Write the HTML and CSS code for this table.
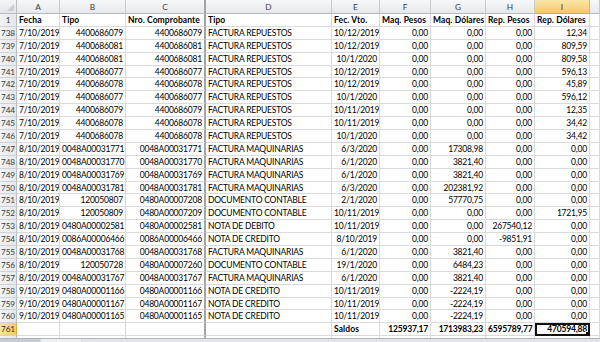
FILE: index.html
```html
<!DOCTYPE html>
<html>
<head>
<meta charset="utf-8">
<link rel="stylesheet" href="styles.css">
</head>
<body>
<div class="app">
<div class="sheet">
  <div class="corner"><span class="tri"></span></div>
  <div class="ch">A</div><div class="ch">B</div><div class="ch frz">C</div><div class="ch">D</div><div class="ch">E</div><div class="ch">F</div><div class="ch">G</div><div class="ch">H</div><div class="ch selh">I</div><div class="ch"></div>

  <div class="rh">1</div>
  <div class="c b">Fecha</div><div class="c b">Tipo</div><div class="c b frz">Nro. Comprobante</div><div class="c b">Tipo</div><div class="c b">Fec. Vto.</div><div class="c b">Maq. Pesos</div><div class="c b">Maq. Dólares</div><div class="c b">Rep. Pesos</div><div class="c b">Rep. Dólares</div><div class="c"></div>

  <div class="rh">738</div>
  <div class="c r">7/10/2019</div><div class="c r">4400686079</div><div class="c r frz">4400686079</div><div class="c">FACTURA REPUESTOS</div><div class="c r">10/12/2019</div><div class="c r">0,00</div><div class="c r">0,00</div><div class="c r">0,00</div><div class="c r">12,34</div><div class="c"></div>

  <div class="rh">739</div>
  <div class="c r">7/10/2019</div><div class="c r">4400686081</div><div class="c r frz">4400686081</div><div class="c">FACTURA REPUESTOS</div><div class="c r">10/12/2019</div><div class="c r">0,00</div><div class="c r">0,00</div><div class="c r">0,00</div><div class="c r">809,59</div><div class="c"></div>

  <div class="rh">740</div>
  <div class="c r">7/10/2019</div><div class="c r">4400686081</div><div class="c r frz">4400686081</div><div class="c">FACTURA REPUESTOS</div><div class="c r">10/1/2020</div><div class="c r">0,00</div><div class="c r">0,00</div><div class="c r">0,00</div><div class="c r">809,58</div><div class="c"></div>

  <div class="rh">741</div>
  <div class="c r">7/10/2019</div><div class="c r">4400686077</div><div class="c r frz">4400686077</div><div class="c">FACTURA REPUESTOS</div><div class="c r">10/12/2019</div><div class="c r">0,00</div><div class="c r">0,00</div><div class="c r">0,00</div><div class="c r">596,13</div><div class="c"></div>

  <div class="rh">742</div>
  <div class="c r">7/10/2019</div><div class="c r">4400686078</div><div class="c r frz">4400686078</div><div class="c">FACTURA REPUESTOS</div><div class="c r">10/12/2019</div><div class="c r">0,00</div><div class="c r">0,00</div><div class="c r">0,00</div><div class="c r">45,89</div><div class="c"></div>

  <div class="rh">743</div>
  <div class="c r">7/10/2019</div><div class="c r">4400686077</div><div class="c r frz">4400686077</div><div class="c">FACTURA REPUESTOS</div><div class="c r">10/1/2020</div><div class="c r">0,00</div><div class="c r">0,00</div><div class="c r">0,00</div><div class="c r">596,12</div><div class="c"></div>

  <div class="rh">744</div>
  <div class="c r">7/10/2019</div><div class="c r">4400686079</div><div class="c r frz">4400686079</div><div class="c">FACTURA REPUESTOS</div><div class="c r">10/11/2019</div><div class="c r">0,00</div><div class="c r">0,00</div><div class="c r">0,00</div><div class="c r">12,35</div><div class="c"></div>

  <div class="rh">745</div>
  <div class="c r">7/10/2019</div><div class="c r">4400686078</div><div class="c r frz">4400686078</div><div class="c">FACTURA REPUESTOS</div><div class="c r">10/11/2019</div><div class="c r">0,00</div><div class="c r">0,00</div><div class="c r">0,00</div><div class="c r">34,42</div><div class="c"></div>

  <div class="rh">746</div>
  <div class="c r">7/10/2019</div><div class="c r">4400686078</div><div class="c r frz">4400686078</div><div class="c">FACTURA REPUESTOS</div><div class="c r">10/1/2020</div><div class="c r">0,00</div><div class="c r">0,00</div><div class="c r">0,00</div><div class="c r">34,42</div><div class="c"></div>

  <div class="rh">747</div>
  <div class="c r">8/10/2019</div><div class="c">0048A00031771</div><div class="c r frz">0048A00031771</div><div class="c">FACTURA MAQUINARIAS</div><div class="c r">6/3/2020</div><div class="c r">0,00</div><div class="c r">17308,98</div><div class="c r">0,00</div><div class="c r">0,00</div><div class="c"></div>

  <div class="rh">748</div>
  <div class="c r">8/10/2019</div><div class="c">0048A00031770</div><div class="c r frz">0048A00031770</div><div class="c">FACTURA MAQUINARIAS</div><div class="c r">6/1/2020</div><div class="c r">0,00</div><div class="c r">3821,40</div><div class="c r">0,00</div><div class="c r">0,00</div><div class="c"></div>

  <div class="rh">749</div>
  <div class="c r">8/10/2019</div><div class="c">0048A00031769</div><div class="c r frz">0048A00031769</div><div class="c">FACTURA MAQUINARIAS</div><div class="c r">6/1/2020</div><div class="c r">0,00</div><div class="c r">3821,40</div><div class="c r">0,00</div><div class="c r">0,00</div><div class="c"></div>

  <div class="rh">750</div>
  <div class="c r">8/10/2019</div><div class="c">0048A00031781</div><div class="c r frz">0048A00031781</div><div class="c">FACTURA MAQUINARIAS</div><div class="c r">6/3/2020</div><div class="c r">0,00</div><div class="c r">202381,92</div><div class="c r">0,00</div><div class="c r">0,00</div><div class="c"></div>

  <div class="rh">751</div>
  <div class="c r">8/10/2019</div><div class="c r">120050807</div><div class="c r frz">0480A00007208</div><div class="c">DOCUMENTO CONTABLE</div><div class="c r">2/1/2020</div><div class="c r">0,00</div><div class="c r">57770,75</div><div class="c r">0,00</div><div class="c r">0,00</div><div class="c"></div>

  <div class="rh">752</div>
  <div class="c r">8/10/2019</div><div class="c r">120050809</div><div class="c r frz">0480A00007209</div><div class="c">DOCUMENTO CONTABLE</div><div class="c r">10/11/2019</div><div class="c r">0,00</div><div class="c r">0,00</div><div class="c r">0,00</div><div class="c r">1721,95</div><div class="c"></div>

  <div class="rh">753</div>
  <div class="c r">8/10/2019</div><div class="c">0480A00002581</div><div class="c r frz">0480A00002581</div><div class="c">NOTA DE DEBITO</div><div class="c r">10/11/2019</div><div class="c r">0,00</div><div class="c r">0,00</div><div class="c r">267540,12</div><div class="c r">0,00</div><div class="c"></div>

  <div class="rh">754</div>
  <div class="c r">8/10/2019</div><div class="c">0086A00006466</div><div class="c r frz">0086A00006466</div><div class="c">NOTA DE CREDITO</div><div class="c r">8/10/2019</div><div class="c r">0,00</div><div class="c r">0,00</div><div class="c r">-9851,91</div><div class="c r">0,00</div><div class="c"></div>

  <div class="rh">755</div>
  <div class="c r">8/10/2019</div><div class="c">0048A00031768</div><div class="c r frz">0048A00031768</div><div class="c">FACTURA MAQUINARIAS</div><div class="c r">6/1/2020</div><div class="c r">0,00</div><div class="c r">3821,40</div><div class="c r">0,00</div><div class="c r">0,00</div><div class="c"></div>

  <div class="rh">756</div>
  <div class="c r">8/10/2019</div><div class="c r">120050728</div><div class="c r frz">0480A00007260</div><div class="c">DOCUMENTO CONTABLE</div><div class="c r">19/1/2020</div><div class="c r">0,00</div><div class="c r">6484,23</div><div class="c r">0,00</div><div class="c r">0,00</div><div class="c"></div>

  <div class="rh">757</div>
  <div class="c r">8/10/2019</div><div class="c">0048A00031767</div><div class="c r frz">0048A00031767</div><div class="c">FACTURA MAQUINARIAS</div><div class="c r">6/1/2020</div><div class="c r">0,00</div><div class="c r">3821,40</div><div class="c r">0,00</div><div class="c r">0,00</div><div class="c"></div>

  <div class="rh">758</div>
  <div class="c r">9/10/2019</div><div class="c">0480A00001166</div><div class="c r frz">0480A00001166</div><div class="c">NOTA DE CREDITO</div><div class="c r">10/11/2019</div><div class="c r">0,00</div><div class="c r">-2224,19</div><div class="c r">0,00</div><div class="c r">0,00</div><div class="c"></div>

  <div class="rh">759</div>
  <div class="c r">9/10/2019</div><div class="c">0480A00001167</div><div class="c r frz">0480A00001167</div><div class="c">NOTA DE CREDITO</div><div class="c r">10/11/2019</div><div class="c r">0,00</div><div class="c r">-2224,19</div><div class="c r">0,00</div><div class="c r">0,00</div><div class="c"></div>

  <div class="rh">760</div>
  <div class="c r">9/10/2019</div><div class="c">0480A00001165</div><div class="c r frz">0480A00001165</div><div class="c">NOTA DE CREDITO</div><div class="c r">10/11/2019</div><div class="c r">0,00</div><div class="c r">-2224,19</div><div class="c r">0,00</div><div class="c r">0,00</div><div class="c"></div>

  <div class="rh selr">761</div>
  <div class="c"></div><div class="c"></div><div class="c frz"></div><div class="c"></div><div class="c b">Saldos</div><div class="c r b">125937,17</div><div class="c r b">1713983,23</div><div class="c r b">6595789,77</div><div class="c r b active">470594,88</div><div class="c"></div>

  <div class="rh">762</div>
  <div class="c"></div><div class="c"></div><div class="c frz"></div><div class="c"></div><div class="c"></div><div class="c"></div><div class="c"></div><div class="c"></div><div class="c"></div><div class="c"></div>
</div>
<div class="bottombar">
  <div class="seg s1"></div><div class="seg s2"></div><div class="seg s3"></div>
</div>
</div>
</body>
</html>
```

FILE: styles.css
```css
html, body {
  margin: 0;
  padding: 0;
  background: #ffffff;
}
.app {
  width: 600px;
  height: 342px;
  display: flex;
  flex-direction: column;
  overflow: hidden;
}
.sheet {
  flex: 0 0 338px;
  height: 338px;
  overflow: hidden;
  display: grid;
  grid-template-columns: 17px 43px 66px 80px 126px 48px 51px 55px 49px 55px 10px;
  grid-template-rows: 14px repeat(26, 12.9px);
  font-family: Lato, "Liberation Sans", sans-serif;
  font-size: 8.5px;
  letter-spacing: -0.2px;
  color: #000;
}
.corner {
  position: relative;
  background: linear-gradient(#f4f5f7, #e3e5e8);
  border-right: 1px solid #b9bcc1;
  border-bottom: 1px solid #b9bcc1;
  box-sizing: border-box;
}
.tri {
  position: absolute;
  right: 2px;
  bottom: 2px;
  width: 0;
  height: 0;
  border-left: 7px solid transparent;
  border-bottom: 7px solid #c9ccd1;
}
.ch {
  background: linear-gradient(#f7f8f9, #e6e8eb);
  border-right: 1px solid #c6c9ce;
  border-bottom: 1px solid #b9bcc1;
  box-sizing: border-box;
  text-align: center;
  line-height: 14px;
  color: #3c3c3c;
  font-size: 8.3px;
  letter-spacing: 0;
}
.ch.selh {
  background: linear-gradient(#fbe7a9, #f3c868);
  border-bottom: 1px solid #e1a83c;
  border-right: 1px solid #e1b55a;
  color: #333;
}
.rh {
  background: linear-gradient(90deg, #f2f3f5, #e5e7ea);
  border-right: 1px solid #b9bcc1;
  border-bottom: 1px solid #cfd2d6;
  box-sizing: border-box;
  text-align: center;
  line-height: 12.9px;
  color: #3c3c3c;
  font-size: 8.2px;
  letter-spacing: -0.1px;
  overflow: hidden;
}
.rh.selr {
  background: linear-gradient(90deg, #fbe3a2, #f4cb6f);
  border-right: 1px solid #e1a83c;
  color: #333;
}
.c {
  border-right: 1px solid #dadada;
  border-bottom: 1px solid #dadada;
  box-sizing: border-box;
  line-height: 12.6px;
  padding: 0 2px;
  white-space: nowrap;
  overflow: visible;
  position: relative;
}
.c.r {
  text-align: right;
  overflow: hidden;
}
.c.b {
  font-weight: bold;
  letter-spacing: 0.1px;
}
.c.r.b {
  letter-spacing: -0.2px;
}
.c.frz, .ch.frz {
  border-right: 2px solid #a4a4a4;
}
.c.active {
  border: 2px solid #111;
  line-height: 9px;
  padding: 0 1px;
}
.c.active::after {
  content: "";
  position: absolute;
  right: -3px;
  bottom: -3px;
  width: 4px;
  height: 4px;
  background: #111;
  border: 1px solid #fff;
}
.bottombar {
  flex: 0 0 4px;
  display: flex;
  background: #d9dde3;
  border-top: 1px solid #aeb3ba;
}
.seg {
  height: 100%;
}
.s1 {
  width: 40px;
  background: #c7ccd3;
}
.s2 {
  width: 40px;
  background: #eef0f3;
  margin-left: 1px;
}
.s3 {
  flex: 1;
  background: #e1e4e8;
  margin-left: 1px;
}
```
